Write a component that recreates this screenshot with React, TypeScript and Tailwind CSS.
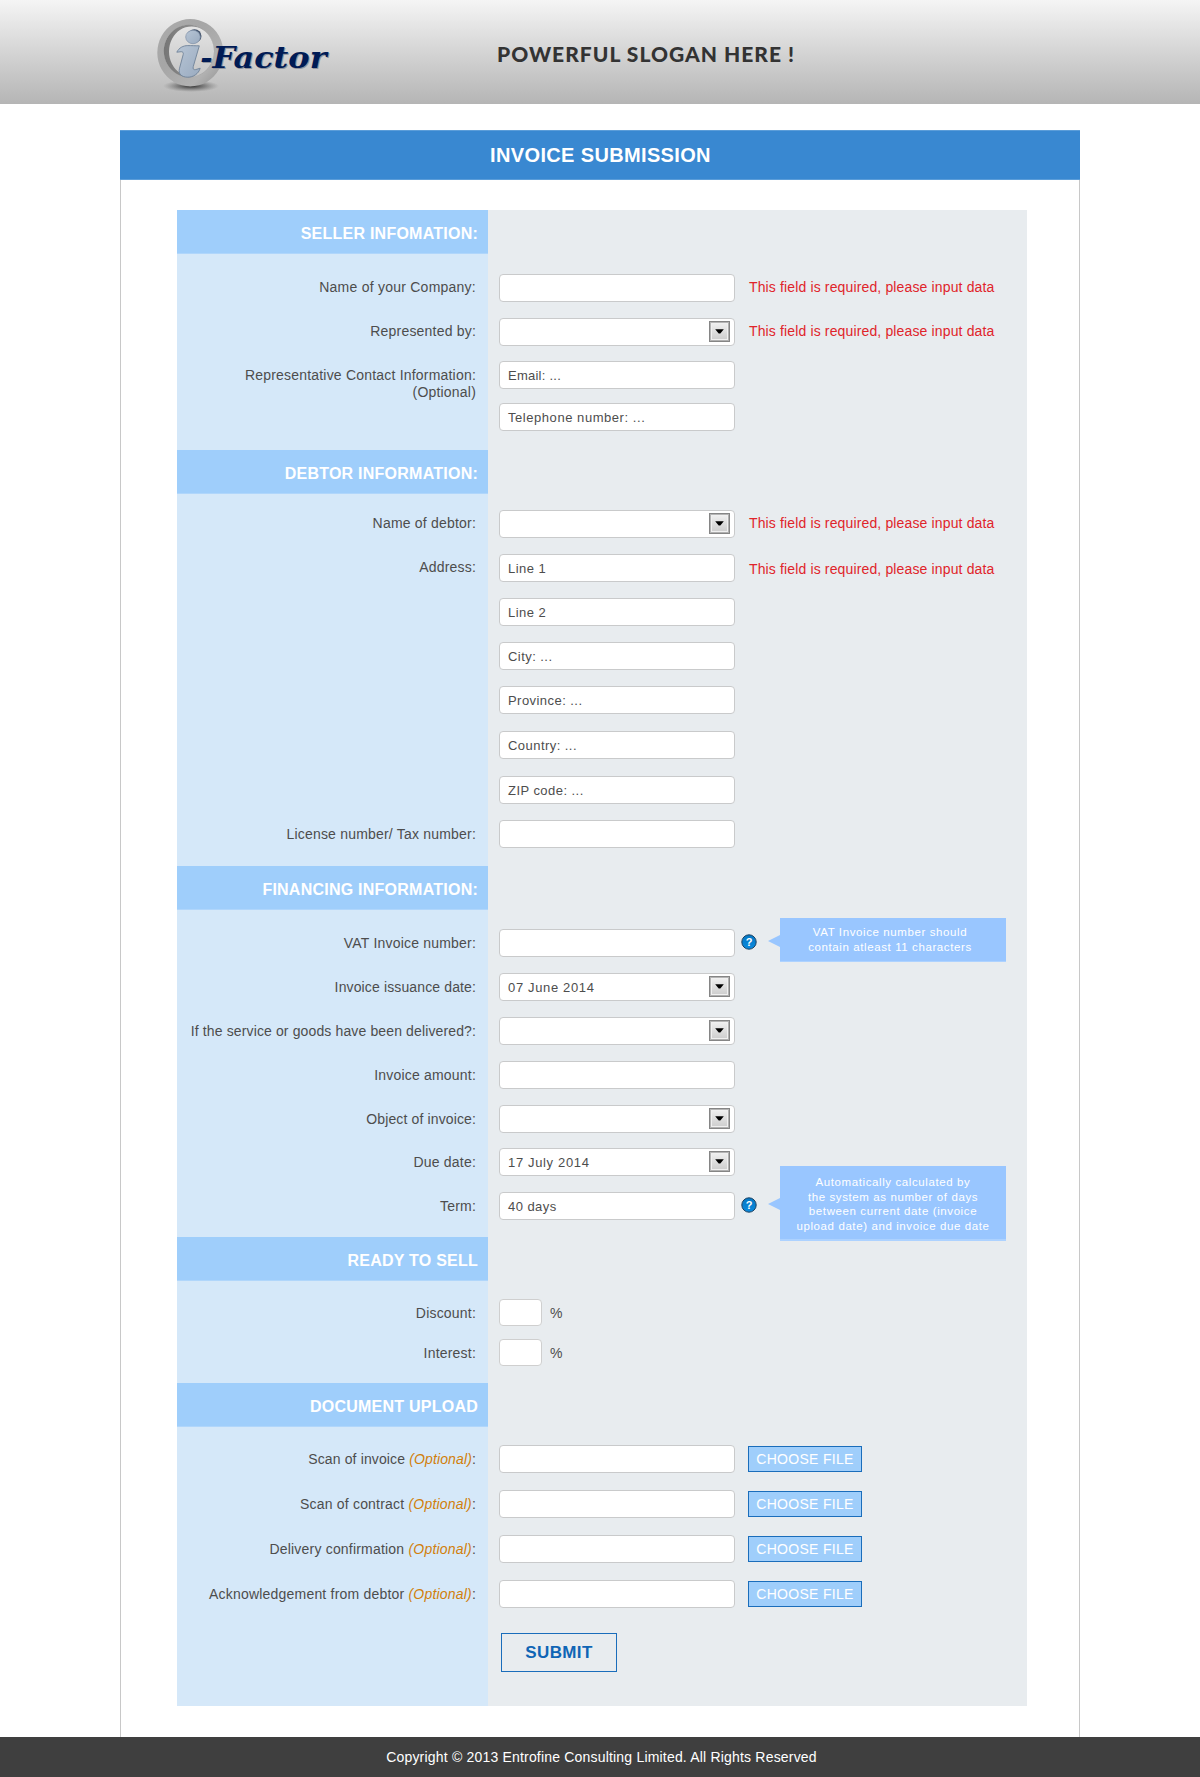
import React from "react";

type RowProps = {
  label?: React.ReactNode;
  gap?: string;
  fit?: "normal" | "tight" | "loose";
  up?: boolean;
  children: React.ReactNode;
};

const labelTracking = {
  normal: "tracking-[0.2px]",
  tight: "tracking-[0.13px]",
  loose: "tracking-[0.24px]",
};

function Row({ label, gap = "mt-4", fit = "normal", up = false, children }: RowProps) {
  return (
    <div className={`flex h-7 items-center ${gap}`}>
      <div
        className={`mr-[23px] h-[17px] w-[299px] shrink-0 text-right text-[14px] leading-[17px] whitespace-nowrap text-[#4d4d4d] ${labelTracking[fit]} ${up ? "mb-0.5" : ""}`}
      >
        {label}
      </div>
      {children}
    </div>
  );
}

function Arrow() {
  return (
    <span className="mb-px flex h-[21px] w-[21px] items-center justify-center border border-[#858585] bg-linear-to-b from-[#f2f2f2] to-[#cbcbcb] shadow-[inset_1px_1px_0_0_#b5b5b5,inset_-1px_-1px_0_0_#b0b0b0,inset_0_0_0_2px_#f0f0f0]">
      <svg width="9" height="5" viewBox="0 0 9 5" className="block">
        <path d="M0.200 0.300h8.600L5.300 4.500H3.700z" fill="#000" />
      </svg>
    </span>
  );
}

const fieldTracking = {
  normal: "tracking-[0.45px]",
  wide: "tracking-[0.65px]",
  medium: "tracking-[0.55px]",
  tight: "tracking-[0.25px]",
};

function Field({ text = "", select = false, fit = "normal" }: { text?: string; select?: boolean; fit?: keyof typeof fieldTracking }) {
  return (
    <div className="flex h-7 w-[236px] shrink-0 items-center justify-between rounded-[4px] border border-[#c9cacb] bg-white pr-1 pl-2">
      <span className={`mt-0.5 text-[13px] leading-4 whitespace-pre text-[#4d4d4d] ${fieldTracking[fit]}`}>{text}</span>
      {select && <Arrow />}
    </div>
  );
}

function Small() {
  return (
    <>
      <div className="mb-px h-[27px] w-[43px] rounded-[4px] border border-[#cfcfcf] bg-white" />
      <span className="ml-2 text-[14px] leading-4 text-[#4d4d4d]">%</span>
    </>
  );
}

function Required({ low = false }: { low?: boolean }) {
  return (
    <span className={`ml-[14px] text-[14px] leading-4 tracking-[0.14px] whitespace-nowrap text-[#e0242a] ${low ? "mt-0.5" : "mb-0.5"}`}>
      This field is required, please input data
    </span>
  );
}

function Help({ lines, tall = false }: { lines: string[]; tall?: boolean }) {
  return (
    <>
      <svg width="16" height="16" viewBox="0 0 16 16" className="mb-0.5 ml-[6px] block shrink-0">
        <defs>
          <linearGradient id="help" x1="0" y1="0" x2="0" y2="1">
            <stop offset="0" stopColor="#0578c4" />
            <stop offset="1" stopColor="#0a8ade" />
          </linearGradient>
        </defs>
        <circle cx="8" cy="8" r="7.2" fill="url(#help)" stroke="#1c4263" strokeWidth="1" />
        <text x="8" y="12" textAnchor="middle" fontFamily="Liberation Sans, sans-serif" fontWeight="700" fontSize="11" fill="#fff">
          ?
        </text>
      </svg>
      <div
        className={`relative ml-[23px] flex w-[226px] shrink-0 flex-col items-center self-start border-[#add2ff] bg-[#99c6ff] text-center text-[11.5px] leading-[14.5px] tracking-[0.6px] text-white ${tall ? "-mt-[26px] h-[75px] border-b-2 pt-[9px]" : "-mt-[11px] h-11 border-b pt-[7px] pr-[6px]"}`}
      >
        <svg width="13" height="14" viewBox="0 0 13 14" className={`absolute -left-[12px] ${tall ? "top-[31px]" : "top-4"}`}>
          <path d="M0 7L13 0.5V13.5z" fill="#99c6ff" />
        </svg>
        {lines.map((l) => (
          <span key={l} className="whitespace-nowrap">{l}</span>
        ))}
      </div>
    </>
  );
}

function Choose() {
  return (
    <button className="ml-[13px] flex h-[26px] w-[114px] items-center justify-center border border-[#1a6dbb] bg-[#9fcefb] text-[14px] leading-4 tracking-[0.3px] whitespace-nowrap text-white">
      CHOOSE FILE
    </button>
  );
}

function Section({ title, height, children }: { title: string; height: string; children: React.ReactNode }) {
  return (
    <section className={`bg-[linear-gradient(to_right,#d5e8f9_311px,#e8ecef_311px)] ${height}`}>
      <h2 className="flex h-11 w-[311px] items-center justify-end border-b border-[#b0d6fb] bg-[#9fcefb] pt-1 pr-[10px] text-[16px] leading-5 font-bold tracking-[0.24px] whitespace-nowrap text-white">
        {title}
      </h2>
      {children}
    </section>
  );
}

function Optional({ children }: { children: string }) {
  return (
    <>
      {children} <em className="text-[#d17f0b]">(Optional)</em>:
    </>
  );
}

function Logo() {
  return (
    <svg width="190" height="96" viewBox="0 0 190 96" className="block">
      <defs>
        <linearGradient id="ring" x1="0" y1="0" x2="1" y2="1">
          <stop offset="0" stopColor="#ababab" />
          <stop offset="0.4" stopColor="#a6a6a6" />
          <stop offset="0.75" stopColor="#b2b2b2" />
          <stop offset="1" stopColor="#8e8e8e" />
        </linearGradient>
        <linearGradient id="inner" x1="0" y1="0" x2="1" y2="0">
          <stop offset="0" stopColor="#767676" />
          <stop offset="0.6" stopColor="#8f8f8f" />
          <stop offset="1" stopColor="#ababab" />
        </linearGradient>
        <linearGradient id="glass" x1="0" y1="0" x2="1" y2="1">
          <stop offset="0" stopColor="#b7c5d5" />
          <stop offset="1" stopColor="#9aabc0" />
        </linearGradient>
        <radialGradient id="shade">
          <stop offset="0" stopColor="#222" stopOpacity="0.95" />
          <stop offset="0.5" stopColor="#444" stopOpacity="0.5" />
          <stop offset="1" stopColor="#666" stopOpacity="0" />
        </radialGradient>
      </defs>
      <ellipse cx="36" cy="86" rx="28" ry="6" fill="url(#shade)" />
      <path fillRule="evenodd" d="M35.300 19a33 33.700 0 1 0 .01 0zM34 25a25 26 0 1 1-.01 0z" fill="url(#ring)" />
      <path fillRule="evenodd" d="M34 24.800a25.200 26.200 0 1 0 .01 0zM36.500 26.500a22.500 25 0 1 1-.01 0z" fill="url(#inner)" />
      <ellipse cx="39.500" cy="36" rx="7" ry="6.800" fill="#42526a" />
      <ellipse cx="38" cy="37" rx="7.300" ry="6.700" fill="url(#glass)" stroke="#7f91a8" strokeWidth="0.700" />
      <path
        d="M21.800 52.200c2.200-4.500 6.500-6.600 11-6.600 4 0 7 .2 11.500.2l-6 20.600c-.7 2.600.2 3.600 2.400 3.200l4.500-1.400c-1.600 5.700-7 9-12.400 9-6.200 0-9.600-3.200-8.400-8.400l3.800-14.300c.4-1.900-.4-2.800-2-2.800z"
        fill="url(#glass)"
        stroke="#6f8299"
        strokeWidth="0.900"
      />
      <g fontFamily="DejaVu Serif, serif" fontStyle="italic" fontWeight="700" fontSize="29.5">
        <g fill="#8f939c">
          <text x="46.200" y="68.700">-</text>
          <text x="58.500" y="68.700" textLength="114" lengthAdjust="spacingAndGlyphs">Factor</text>
        </g>
        <g fill="#001b55">
          <text x="45.200" y="67.700">-</text>
          <text x="57.500" y="67.700" textLength="114" lengthAdjust="spacingAndGlyphs">Factor</text>
        </g>
      </g>
    </svg>
  );
}

export default function App() {
  return (
    <div className="flex h-[1777px] w-[1200px] flex-col bg-white font-['Liberation_Sans',Arial,sans-serif]">
      <header className="flex h-[104px] shrink-0 bg-linear-to-b from-[#f5f5f5] to-[#b5b5b5] pl-[155px]">
        <Logo />
        <p className="mt-10 ml-[152px] h-7 font-[Lato] text-[21px] leading-7 font-black tracking-[1.02px] whitespace-nowrap text-[#333]">
          POWERFUL SLOGAN HERE !
        </p>
      </header>

      <main className="mx-auto mt-[26px] h-[1607px] w-[960px] shrink-0">
        <h1 className="flex h-[50px] items-center justify-center border-y border-[#5b9dd9] bg-[#3988d1] pl-px text-[20px] leading-6 font-bold tracking-[0.35px] text-white">
          INVOICE SUBMISSION
        </h1>
        <form className="h-[1557px] border-x border-[#c8c8c8] pt-[30px] pl-14" onSubmit={(e) => e.preventDefault()}>
          <div className="w-[850px]">
            <Section title="SELLER INFOMATION:" height="h-[240px]">
              <Row up fit="loose" gap="mt-5" label="Name of your Company:"><Field /><Required /></Row>
              <Row up label="Represented by:"><Field select /><Required /></Row>
              <Row gap="mt-[15px]" label={<>Representative Contact Information:<br />(Optional)</>}><Field fit="tight" text="Email: ..." /></Row>
              <Row gap="mt-[14px]"><Field fit="medium" text="Telephone number: ..." /></Row>
            </Section>

            <Section title="DEBTOR INFORMATION:" height="h-[416px]">
              <Row up label="Name of debtor:"><Field select /><Required /></Row>
              <Row up label="Address:"><Field text="Line 1" /><Required low /></Row>
              <Row><Field text="Line 2" /></Row>
              <Row><Field text="City: ..." /></Row>
              <Row><Field text="Province: ..." /></Row>
              <Row gap="mt-[17px]"><Field text="Country: ..." /></Row>
              <Row gap="mt-[17px]"><Field text="ZIP code: ..." /></Row>
              <Row label="License number/ Tax number:"><Field /></Row>
            </Section>

            <Section title="FINANCING INFORMATION:" height="h-[371px]">
              <Row gap="mt-[19px]" label="VAT Invoice number:">
                <Field />
                <Help lines={["VAT Invoice number should", "contain atleast 11 characters"]} />
              </Row>
              <Row fit="tight" label="Invoice issuance date:"><Field select fit="wide" text="07 June 2014" /></Row>
              <Row fit="tight" label="If the service or goods have been delivered?:"><Field select /></Row>
              <Row label="Invoice amount:"><Field /></Row>
              <Row fit="tight" label="Object of invoice:"><Field select /></Row>
              <Row gap="mt-[15px]" label="Due date:"><Field select fit="wide" text="17 July 2014" /></Row>
              <Row label="Term:">
                <Field text="40 days" />
                <Help
                  tall
                  lines={[
                    "Automatically calculated by",
                    "the system as number of days",
                    "between current date (invoice",
                    "upload date) and invoice due date",
                  ]}
                />
              </Row>
            </Section>

            <Section title="READY TO SELL" height="h-[146px]">
              <Row gap="mt-[18px]" label="Discount:"><Small /></Row>
              <Row gap="mt-3" label="Interest:"><Small /></Row>
            </Section>

            <Section title="DOCUMENT UPLOAD" height="h-[323px]">
              <Row fit="tight" gap="mt-[18px]" label={<Optional>Scan of invoice</Optional>}><Field /><Choose /></Row>
              <Row gap="mt-[17px]" label={<Optional>Scan of contract</Optional>}><Field /><Choose /></Row>
              <Row gap="mt-[17px]" label={<Optional>Delivery confirmation</Optional>}><Field /><Choose /></Row>
              <Row gap="mt-[17px]" label={<Optional>Acknowledgement from debtor</Optional>}><Field /><Choose /></Row>
              <button className="mt-[25px] ml-[324px] flex h-[39px] w-[116px] items-center justify-center border border-[#1a6dbb] text-[17px] leading-5 font-bold tracking-[0.4px] text-[#0f65b5]">
                SUBMIT
              </button>
            </Section>
          </div>
        </form>
      </main>

      <footer className="flex h-10 shrink-0 items-center justify-center bg-[#3f3f3f] pl-[3px] text-[14px] leading-4 tracking-[0.19px] text-white">
        Copyright © 2013 Entrofine Consulting Limited. All Rights Reserved
      </footer>
    </div>
  );
}
